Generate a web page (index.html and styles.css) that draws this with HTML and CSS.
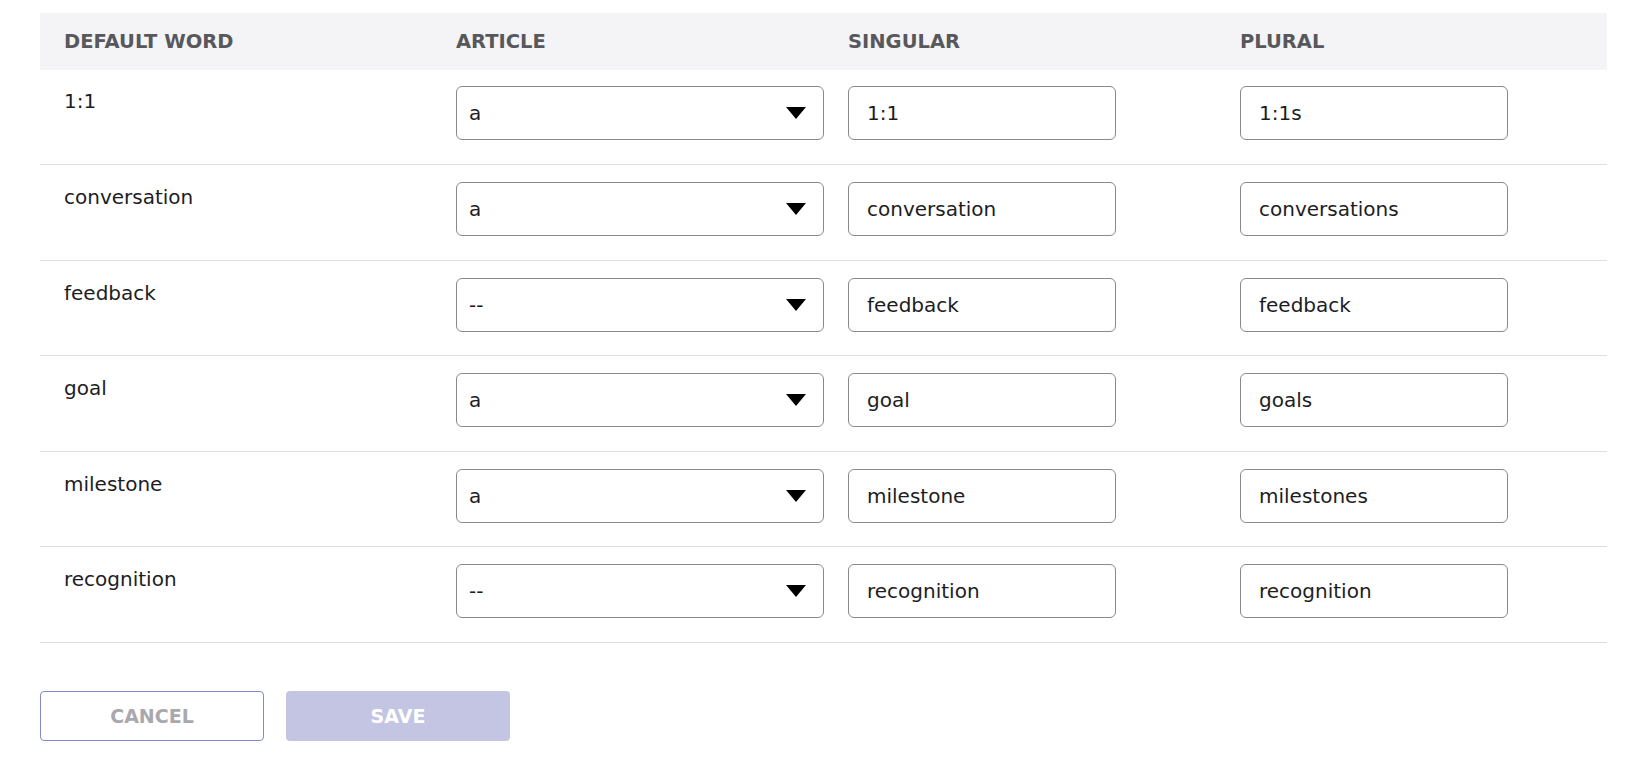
FILE: index.html
```html
<!DOCTYPE html>
<html lang="en">
<head>
    <meta charset="UTF-8">
    <meta name="viewport" content="width=device-width, initial-scale=1.0">
    <title>Terminology</title>
    <link rel="stylesheet" href="styles.css">
</head>
<body>
    <main class="terms">
        <div class="terms-head">
            <div class="cell">Default Word</div>
            <div class="cell">Article</div>
            <div class="cell">Singular</div>
            <div class="cell">Plural</div>
        </div>

        <div class="terms-row">
            <div class="cell word">1:1</div>
            <div class="cell">
                <div class="select-wrap">
                    <select><option>a</option><option>an</option><option>--</option></select>
                    <svg class="caret" width="20" height="12" viewBox="0 0 20 12"><path d="M0 0h20L10 12z"/></svg>
                </div>
            </div>
            <div class="cell"><input type="text" value="1:1"></div>
            <div class="cell"><input type="text" value="1:1s"></div>
        </div>

        <div class="terms-row">
            <div class="cell word">conversation</div>
            <div class="cell">
                <div class="select-wrap">
                    <select><option>a</option><option>an</option><option>--</option></select>
                    <svg class="caret" width="20" height="12" viewBox="0 0 20 12"><path d="M0 0h20L10 12z"/></svg>
                </div>
            </div>
            <div class="cell"><input type="text" value="conversation"></div>
            <div class="cell"><input type="text" value="conversations"></div>
        </div>

        <div class="terms-row">
            <div class="cell word">feedback</div>
            <div class="cell">
                <div class="select-wrap">
                    <select><option>--</option><option>a</option><option>an</option></select>
                    <svg class="caret" width="20" height="12" viewBox="0 0 20 12"><path d="M0 0h20L10 12z"/></svg>
                </div>
            </div>
            <div class="cell"><input type="text" value="feedback"></div>
            <div class="cell"><input type="text" value="feedback"></div>
        </div>

        <div class="terms-row">
            <div class="cell word">goal</div>
            <div class="cell">
                <div class="select-wrap">
                    <select><option>a</option><option>an</option><option>--</option></select>
                    <svg class="caret" width="20" height="12" viewBox="0 0 20 12"><path d="M0 0h20L10 12z"/></svg>
                </div>
            </div>
            <div class="cell"><input type="text" value="goal"></div>
            <div class="cell"><input type="text" value="goals"></div>
        </div>

        <div class="terms-row">
            <div class="cell word">milestone</div>
            <div class="cell">
                <div class="select-wrap">
                    <select><option>a</option><option>an</option><option>--</option></select>
                    <svg class="caret" width="20" height="12" viewBox="0 0 20 12"><path d="M0 0h20L10 12z"/></svg>
                </div>
            </div>
            <div class="cell"><input type="text" value="milestone"></div>
            <div class="cell"><input type="text" value="milestones"></div>
        </div>

        <div class="terms-row">
            <div class="cell word">recognition</div>
            <div class="cell">
                <div class="select-wrap">
                    <select><option>--</option><option>a</option><option>an</option></select>
                    <svg class="caret" width="20" height="12" viewBox="0 0 20 12"><path d="M0 0h20L10 12z"/></svg>
                </div>
            </div>
            <div class="cell"><input type="text" value="recognition"></div>
            <div class="cell"><input type="text" value="recognition"></div>
        </div>

        <div class="actions">
            <button type="button" class="btn btn-cancel">Cancel</button>
            <button type="button" class="btn btn-save" disabled>Save</button>
        </div>
    </main>
</body>
</html>
```

FILE: styles.css
```css
body {
    margin: 0;
    font-family: "DejaVu Sans", "Open Sans", Arial, sans-serif;
    color: #1d1d1f;
    background: #fff;
}

.terms {
    padding: 13px 24px 0 40px;
}

.terms-head,
.terms-row {
    display: grid;
    grid-template-columns: repeat(4, 392px);
}

.terms-head {
    height: 57px;
    align-items: center;
    background: #f4f4f6;
    color: #58585c;
    font-size: 19.5px;
    font-weight: 700;
    text-transform: uppercase;
}

.cell {
    padding-left: 24px;
}

.terms-row {
    height: 95px;
    border-bottom: 1px solid #dcdce3;
    box-sizing: border-box;
    padding-top: 16px;
}

.terms-row + .terms-row {
    height: 95.5px;
    padding-top: 17px;
}

.word {
    font-size: 20px;
    line-height: 24px;
    padding-top: 3px;
}

.select-wrap {
    position: relative;
    width: 368px;
}

.select-wrap select,
.cell input {
    height: 54px;
    box-sizing: border-box;
    border: 1px solid #8a8a8e;
    border-radius: 6px;
    background: #fff;
    font-family: inherit;
    font-size: 20px;
    color: #1d1d1f;
    outline: none;
}

.select-wrap select {
    -webkit-appearance: none;
    appearance: none;
    width: 100%;
    padding: 0 40px 0 12px;
}

.caret {
    position: absolute;
    top: 21px;
    right: 18px;
    pointer-events: none;
}

.cell input {
    width: 268px;
    padding: 0 18px;
}

.actions {
    display: flex;
    gap: 22px;
    padding-top: 48px;
}

.btn {
    width: 224px;
    height: 50px;
    border-radius: 4px;
    font-family: inherit;
    font-size: 19px;
    font-weight: 700;
    text-transform: uppercase;
}

.btn-cancel {
    background: #fff;
    border: 1px solid #8489cc;
    color: #a9a9ad;
}

.btn-save {
    background: #c3c5e3;
    border: none;
    color: #fff;
}
```
